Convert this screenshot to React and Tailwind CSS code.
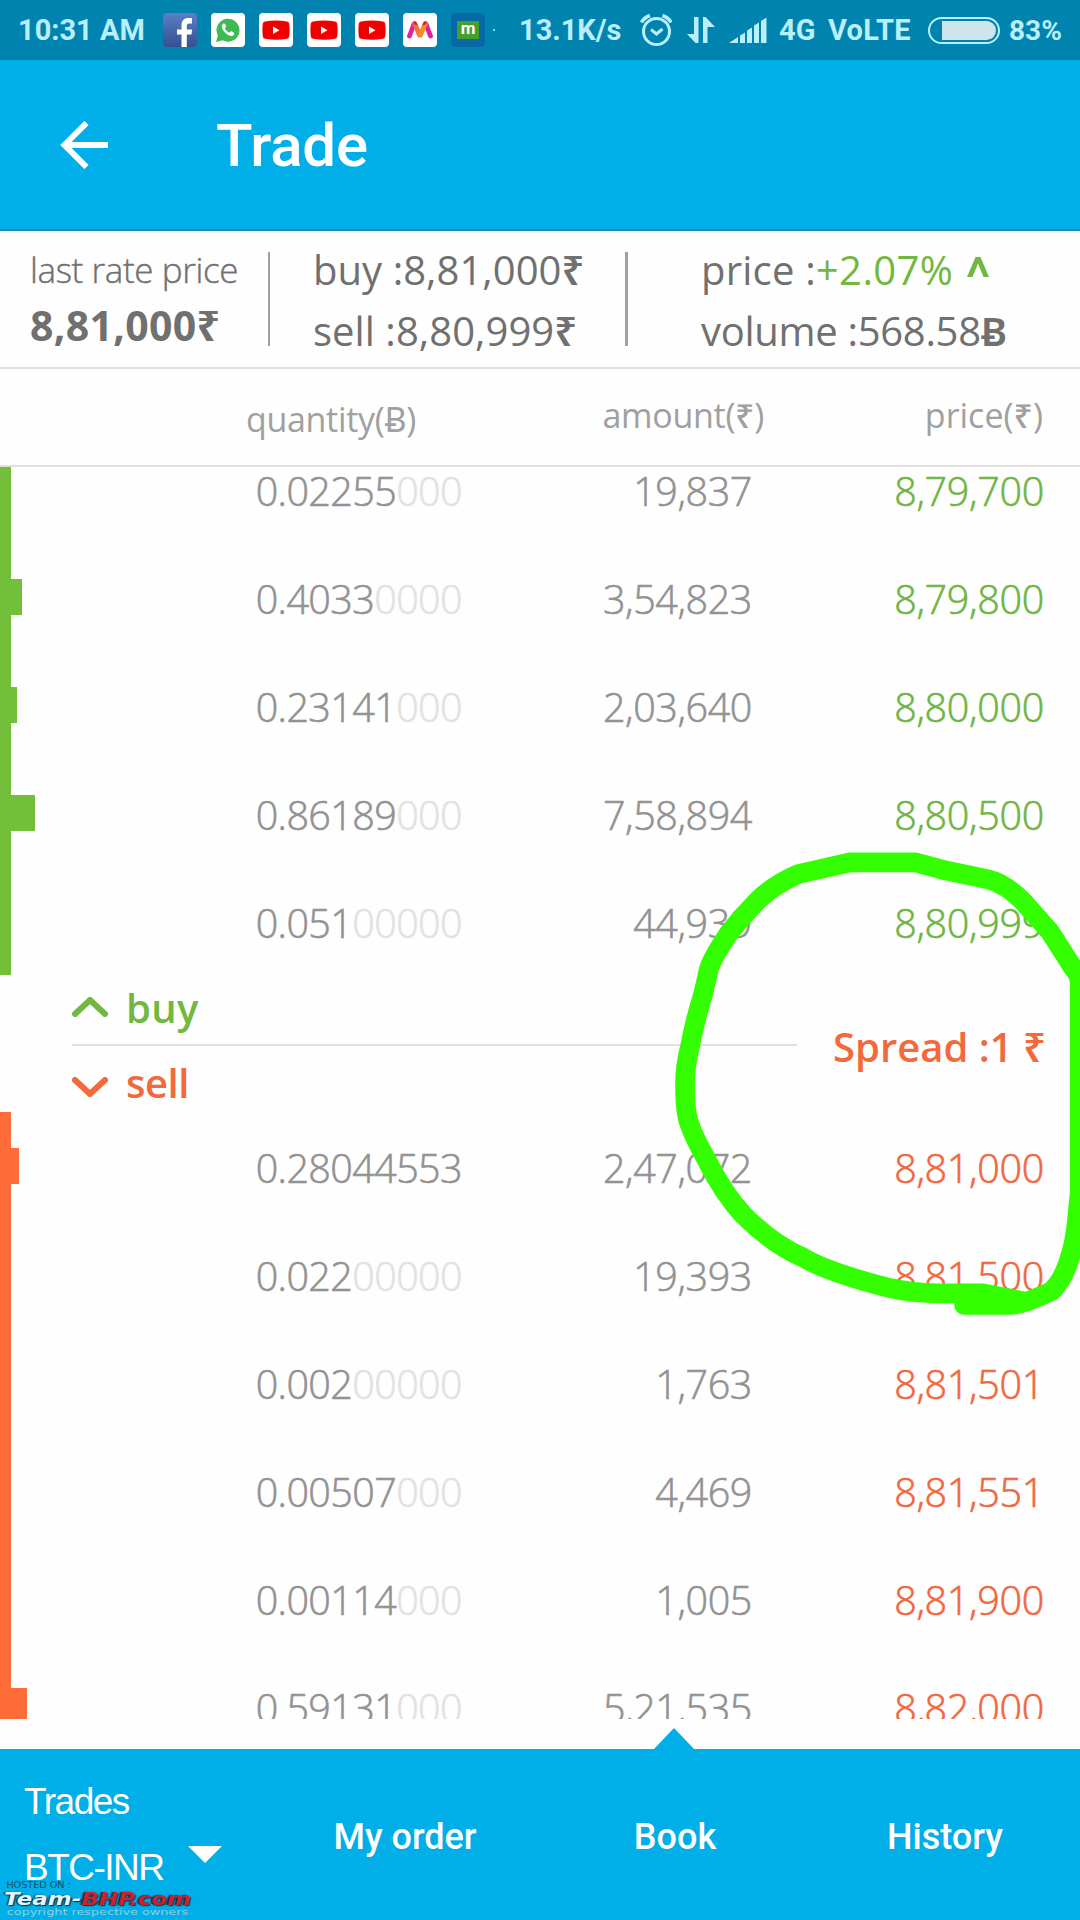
const buyOrders = [
  { qty: "0.02255", pad: "000", amount: "19,837", price: "8,79,700", depth: 11 },
  { qty: "0.4033", pad: "0000", amount: "3,54,823", price: "8,79,800", depth: 22 },
  { qty: "0.23141", pad: "000", amount: "2,03,640", price: "8,80,000", depth: 17 },
  { qty: "0.86189", pad: "000", amount: "7,58,894", price: "8,80,500", depth: 35 },
  { qty: "0.051", pad: "00000", amount: "44,939", price: "8,80,999", depth: 11 },
];

const sellOrders = [
  { qty: "0.28044553", pad: "", amount: "2,47,072", price: "8,81,000", depth: 19 },
  { qty: "0.022", pad: "00000", amount: "19,393", price: "8,81,500", depth: 11 },
  { qty: "0.002", pad: "00000", amount: "1,763", price: "8,81,501", depth: 11 },
  { qty: "0.00507", pad: "000", amount: "4,469", price: "8,81,551", depth: 11 },
  { qty: "0.00114", pad: "000", amount: "1,005", price: "8,81,900", depth: 11 },
  { qty: "0.59131", pad: "000", amount: "5,21,535", price: "8,82,000", depth: 27 },
];

function YoutubeIcon() {
  return (
    <svg className="size-[34px] shrink-0" viewBox="0 0 34 34">
      <rect width="34" height="34" rx="4" fill="#fff" />
      <path d="M6 8.500Q17 6.500 28 8.500Q30 8.800 30.300 11Q31 17 30.300 23Q30 25.500 28 25.800Q17 27.500 6 25.800Q4 25.500 3.700 23Q3 17 3.700 11Q4 8.800 6 8.500z" fill="#f00000" />
      <path d="M14 13.500v7.500l6.500-3.700z" fill="#fff" />
    </svg>
  );
}

function StatusBar() {
  return (
    <div className="flex h-[60px] items-center bg-[#0084af] pl-[18px] font-[Roboto] text-[29px] font-bold text-[#b9effc]">
      <span className="w-[145px] pt-0.5 whitespace-nowrap">10:31 AM</span>
      <div className="flex w-[338px] items-center gap-3.5">
        {/* Facebook */}
        <svg className="size-[34px] shrink-0" viewBox="0 0 34 34">
          <defs>
            <linearGradient id="fb" x1="0" y1="0" x2="0" y2="1">
              <stop offset="0" stopColor="#5a7fc6" />
              <stop offset="1" stopColor="#35508f" />
            </linearGradient>
          </defs>
          <rect width="34" height="34" rx="4" fill="url(#fb)" />
          <path
            d="M18.500 34V21.500h-4.500v-5h4.500v-4c0-5 2.500-7.500 7-7.500h3.500v5.500h-2.500c-2 0-2.700 1-2.700 2.500v3.500h5.400l-.7 5h-4.700V34z"
            fill="#fff"
          />
        </svg>
        {/* WhatsApp */}
        <div className="flex size-[34px] shrink-0 items-center justify-center rounded bg-white">
          <svg className="size-[26px]" viewBox="0 0 26 26">
            <path d="M1 25l1.800-6.500A11.500 11.500 0 1 1 7.500 23.300z" fill="#3dbb52" />
            <path
              d="M8.500 6.500c-3 2-1.500 6 1.500 9s7 5 9 2.200c1-1.700-.5-2.500-2.500-3.500-1.200-.4-1.500 1.600-2.500 1.300-1.500-.6-3.500-2.500-4-4-.2-1 1.500-1.300 1-2.500-.5-1.500-1-3-2.500-2.500z"
              fill="#fff"
            />
          </svg>
        </div>
        <YoutubeIcon />
        <YoutubeIcon />
        <YoutubeIcon />
        {/* Myntra */}
        <svg className="size-[34px] shrink-0" viewBox="0 0 34 34">
          <rect width="34" height="34" rx="4" fill="#fff" />
          <g fill="none" strokeWidth="4.800" strokeLinecap="round">
            <path d="M6.500 23l4.500-12" stroke="#e3209c" />
            <path d="M27.500 23L23 11" stroke="#e3209c" />
            <path d="M12 11l4.500 11" stroke="#f4713c" />
            <path d="M22 11l-4.500 11" stroke="#f98b2b" />
          </g>
          <path d="M10 8.500h3l1.500 4-3-1zM24 8.500h-3l-1.500 4 3-1z" fill="#c2203f" />
        </svg>
        {/* Green flag with m */}
        <div className="flex size-[34px] shrink-0 items-center justify-center rounded bg-[#0668a4]">
          <span className="flex h-[18px] w-[22px] items-center justify-center bg-[#43a02f] pb-1 text-[17px] leading-none text-white">
            m
          </span>
        </div>
        <span className="-ml-1.5 size-0.5 shrink-0 bg-[#8fd8ee]" />
      </div>
      <span className="ml-[18px] w-[121px] pt-0.5 whitespace-nowrap">13.1K/s</span>
      {/* Alarm clock */}
      <svg className="h-8 w-8 shrink-0" viewBox="0 0 32 32" fill="none" stroke="currentColor">
        <circle cx="16.500" cy="17.500" r="13" strokeWidth="3" />
        <path d="M11 15.500l5.500 4.500 6-5" strokeWidth="3" />
        <path d="M1.500 8.500Q4 3.500 10 1.500M31 8.500Q28.500 3.500 22.500 1.500" strokeWidth="3.600" />
      </svg>
      {/* Data transfer arrows */}
      <svg className="ml-[15px] h-[26px] w-7 shrink-0" viewBox="0 0 28 26" fill="currentColor">
        <path d="M7 0h4.500v26H8.500L0 17h7zM16 26V0h2.500L28 10h-7.500v16z" />
      </svg>
      {/* Signal */}
      <svg className="ml-[14px] h-[26px] w-[38px] shrink-0" viewBox="0 0 38 26" fill="currentColor">
        <path d="M0 26l9-6v6zM11 18.500l5-3V26h-5zM18 13.500l5-3V26h-5zM25 8.500l5-3V26h-5zM32 4l5.500-3.500V26H32z" />
      </svg>
      <span className="ml-3 w-[49px] pt-0.5 whitespace-nowrap">4G</span>
      <span className="w-[100px] pt-0.5 tracking-[0.3px] whitespace-nowrap">VoLTE</span>
      {/* Battery */}
      <div className="flex h-[27px] w-[72px] shrink-0 items-center justify-end rounded-full border-2 border-[#b9effc] pr-0.5">
        <div className="h-[19px] w-[54px] rounded-r-full bg-[#cde6ec]" />
      </div>
      <span className="ml-[9px] pt-0.5 text-[28px] whitespace-nowrap">83%</span>
    </div>
  );
}

function Rupee({ className = "font-semibold" }) {
  return <span className={`font-['Noto_Sans'] ${className}`}>₹</span>;
}

function SummaryBar() {
  return (
    <div className="flex h-[138px] border-b-2 border-[#e0e0e0] text-[40px] leading-[61px] whitespace-nowrap text-[#707070]">
      <div className="w-[268px] pt-2 pl-[30px]">
        <div className="h-[56px] text-[35px] font-light tracking-[-0.4px] [-webkit-text-stroke:0.4px]">
          last rate price
        </div>
        <div className="text-[41px] font-bold tracking-[0.3px]">
          8,81,000
          <Rupee className="font-bold" />
        </div>
      </div>
      <div className="mt-[21px] h-[94px] w-0.5 bg-[#a0a0a0]" />
      <div className="w-[355px] pt-2 pl-[43px] tracking-[0.05px]">
        <div>
          buy :8,81,000
          <Rupee />
        </div>
        <div>
          sell :8,80,999
          <Rupee />
        </div>
      </div>
      <div className="mt-[21px] h-[94px] w-[3px] bg-[#a0a0a0]" />
      <div className="flex-1 pt-2 pl-[73px] tracking-[0.2px]">
        <div className="flex">
          <span>price :</span>
          <span className="tracking-[0.4px] text-[#72b840]">+2.07%</span>
          <svg className="mt-[18px] ml-[14px] h-5 w-[22px]" viewBox="0 0 22 20" fill="#72b840">
            <path d="M0 20L8.500 0h5L22 20h-5.500L11 6.500 5.500 20z" />
          </svg>
        </div>
        <div className="tracking-[-0.3px]">
          volume :568.58<span className="font-semibold">Ƀ</span>
        </div>
      </div>
    </div>
  );
}

function OrderRow({ order, isBuy }) {
  return (
    <div className="relative flex h-[108px] shrink-0 items-center text-[39.500px] font-light whitespace-nowrap text-[#929292] [-webkit-text-stroke:0.6px]">
      <div className={`h-full w-[11px] ${isBuy ? "bg-[#72bf3a]" : "bg-[#ff6c37]"}`} />
      <div
        className={`absolute left-0 h-9 ${isBuy ? "bg-[#72bf3a]" : "bg-[#ff6c37]"}`}
        style={{ width: order.depth }}
      />
      <div className="w-[451px] pt-1.5 text-right tracking-[-0.6px]">
        {order.qty}
        <span className="text-[#e2e2e2]">{order.pad}</span>
      </div>
      <div className="w-[290px] pt-1.5 text-right tracking-[-0.4px]">{order.amount}</div>
      <div
        className={`w-[292px] pt-1.5 text-right tracking-[-0.300px] ${
          isBuy ? "text-[#6fb544]" : "text-[#f0683f]"
        }`}
      >
        {order.price}
      </div>
    </div>
  );
}

function SpreadDivider() {
  return (
    <div className="flex h-[137px] shrink-0 items-center pl-[72px] text-[40px] font-semibold whitespace-nowrap">
      <div className="w-[725px]">
        <div className="flex h-[69px] items-center text-[#72b840]">
          <svg
            className="mt-[-6px] h-5 w-9"
            viewBox="0 0 36 20"
            fill="none"
            stroke="currentColor"
            strokeWidth="6"
            strokeLinecap="round"
          >
            <path d="M3 17L18 3l15 14" />
          </svg>
          <span className="ml-[18px] pb-1 tracking-[0.3px]">buy</span>
        </div>
        <div className="h-0.5 bg-[#e0e0e0]" />
        <div className="flex h-[66px] items-center text-[#f26a3c]">
          <svg
            className="mt-[16px] h-5 w-9"
            viewBox="0 0 36 20"
            fill="none"
            stroke="currentColor"
            strokeWidth="6"
            strokeLinecap="round"
          >
            <path d="M3 3l15 14L33 3" />
          </svg>
          <span className="ml-[18px] pt-2 tracking-[-0.5px]">sell</span>
        </div>
      </div>
      <div className="ml-[36px] pt-1.5 text-[#f26a3c]">
        Spread :1 <Rupee />
      </div>
    </div>
  );
}

function BottomNav() {
  return (
    <div className="flex h-[171px] bg-[#00aee8] text-white">
      <div className="relative flex w-[270px] font-['Liberation_Sans'] text-[37px] whitespace-nowrap">
        <div className="w-[188px] pt-[25px] pl-[24px]">
          <div className="h-[66px] tracking-[-1.500px]">Trades</div>
          <div className="tracking-[-1.500px]">BTC-INR</div>
        </div>
        <svg className="mt-[97px] h-[17px] w-[34px]" viewBox="0 0 34 17" fill="white">
          <path d="M0 0h34L17 17z" />
        </svg>
        <Watermark />
      </div>
      <div className="grid flex-1 grid-cols-3 pt-[67px] text-center font-[Roboto] text-[36px] leading-[42px] font-medium">
        <span>My order</span>
        <span className="relative">
          <svg
            className="absolute -top-[88px] left-[113px] h-[22px] w-[42px]"
            viewBox="0 0 42 22"
            fill="#00aee8"
          >
            <path d="M0 22L21 0l21 22z" />
          </svg>
          Book
        </span>
        <span>History</span>
      </div>
    </div>
  );
}

function Watermark() {
  return (
    <div className="absolute top-[133px] left-1 h-[37px] w-[190px] font-['DejaVu_Sans'] leading-none">
      <div className="h-[9px] w-fit origin-left scale-x-[1.2] pl-0.5 text-[8px] text-[#1b4f66]">HOSTED ON :</div>
      <div className="h-[17px] w-fit origin-left scale-x-[1.35] text-[17px] font-bold italic [text-shadow:1px_1px_1px_#0b3346,-1px_0_1px_#0b3346]">
        <span className="text-[#e4f5fc]">Team-</span>
        <span className="text-[#cc2230]">BHP.com</span>
      </div>
      <div className="w-fit origin-left scale-x-[1.42] pl-0.5 text-[9px] text-[#8fd0e6]">
        copyright respective owners
      </div>
    </div>
  );
}

export default function App() {
  return (
    <div className="relative flex h-[1920px] w-[1080px] flex-col overflow-hidden bg-[#fefefe] font-['Open_Sans','Noto_Sans',sans-serif]">
      <StatusBar />
      <header className="flex h-[171px] items-center border-b-2 border-[#1c8fb3] bg-[#00aee8] text-white">
        <svg className="ml-[60px] h-12 w-12" viewBox="0 0 48 48" fill="none" stroke="white" strokeWidth="6">
          <path d="M48 24H5M26.500 2L4.500 24l22 22" />
        </svg>
        <h1 className="ml-[108px] pt-0.5 font-[Roboto] text-[60px] font-medium tracking-[-0.2px]">Trade</h1>
      </header>
      <SummaryBar />
      <div className="flex h-[98px] border-b-2 border-[#e0e0e0] text-[34px] leading-[48px] tracking-[-0.3px] whitespace-nowrap text-[#a0a0a0]">
        <div className="w-[416px] pt-[26px] text-right">quantity(Ƀ)</div>
        <div className="w-[348px] pt-[22px] text-right">
          amount(
          <Rupee className="font-medium" />)
        </div>
        <div className="w-[279px] pt-[22px] text-right tracking-normal">
          price(
          <Rupee className="font-medium" />)
        </div>
      </div>
      {/* Order book, scrolled partway through the first row */}
      <div className="flex h-[1252px] flex-col overflow-hidden">
        <div className="-mt-8 shrink-0">
          {buyOrders.map((order) => (
            <OrderRow key={order.price} order={order} isBuy />
          ))}
        </div>
        <SpreadDivider />
        {sellOrders.map((order) => (
          <OrderRow key={order.price} order={order} isBuy={false} />
        ))}
      </div>
      <div className="h-[30px]" />
      <BottomNav />
      {/* Hand-drawn circle around the spread */}
      <svg
        className="absolute top-[820px] left-[640px] h-[520px] w-[440px]"
        viewBox="0 0 1320 1560"
        fill="none"
        stroke="#33ff00"
        strokeWidth="59"
        strokeLinecap="round"
        strokeLinejoin="round"
      >
        <path d="M972 1455H1110Q1150 1455 1235 1413Q1265 1385 1284 1330Q1305 1270 1311 1200L1319 1120V490Q1319 465 1300 445L1230 335L1150 245Q1095 190 1045 178L920 152L825 127H630L475 162Q400 195 355 240Q310 285 270 335Q215 415 206 450L190 520Q165 600 150 680Q135 740 135 790Q135 860 143 895Q155 940 200 1020Q250 1120 310 1185Q400 1275 490 1313Q560 1355 740 1402Q820 1420 900 1420H1030L1150 1444" />
      </svg>
    </div>
  );
}
